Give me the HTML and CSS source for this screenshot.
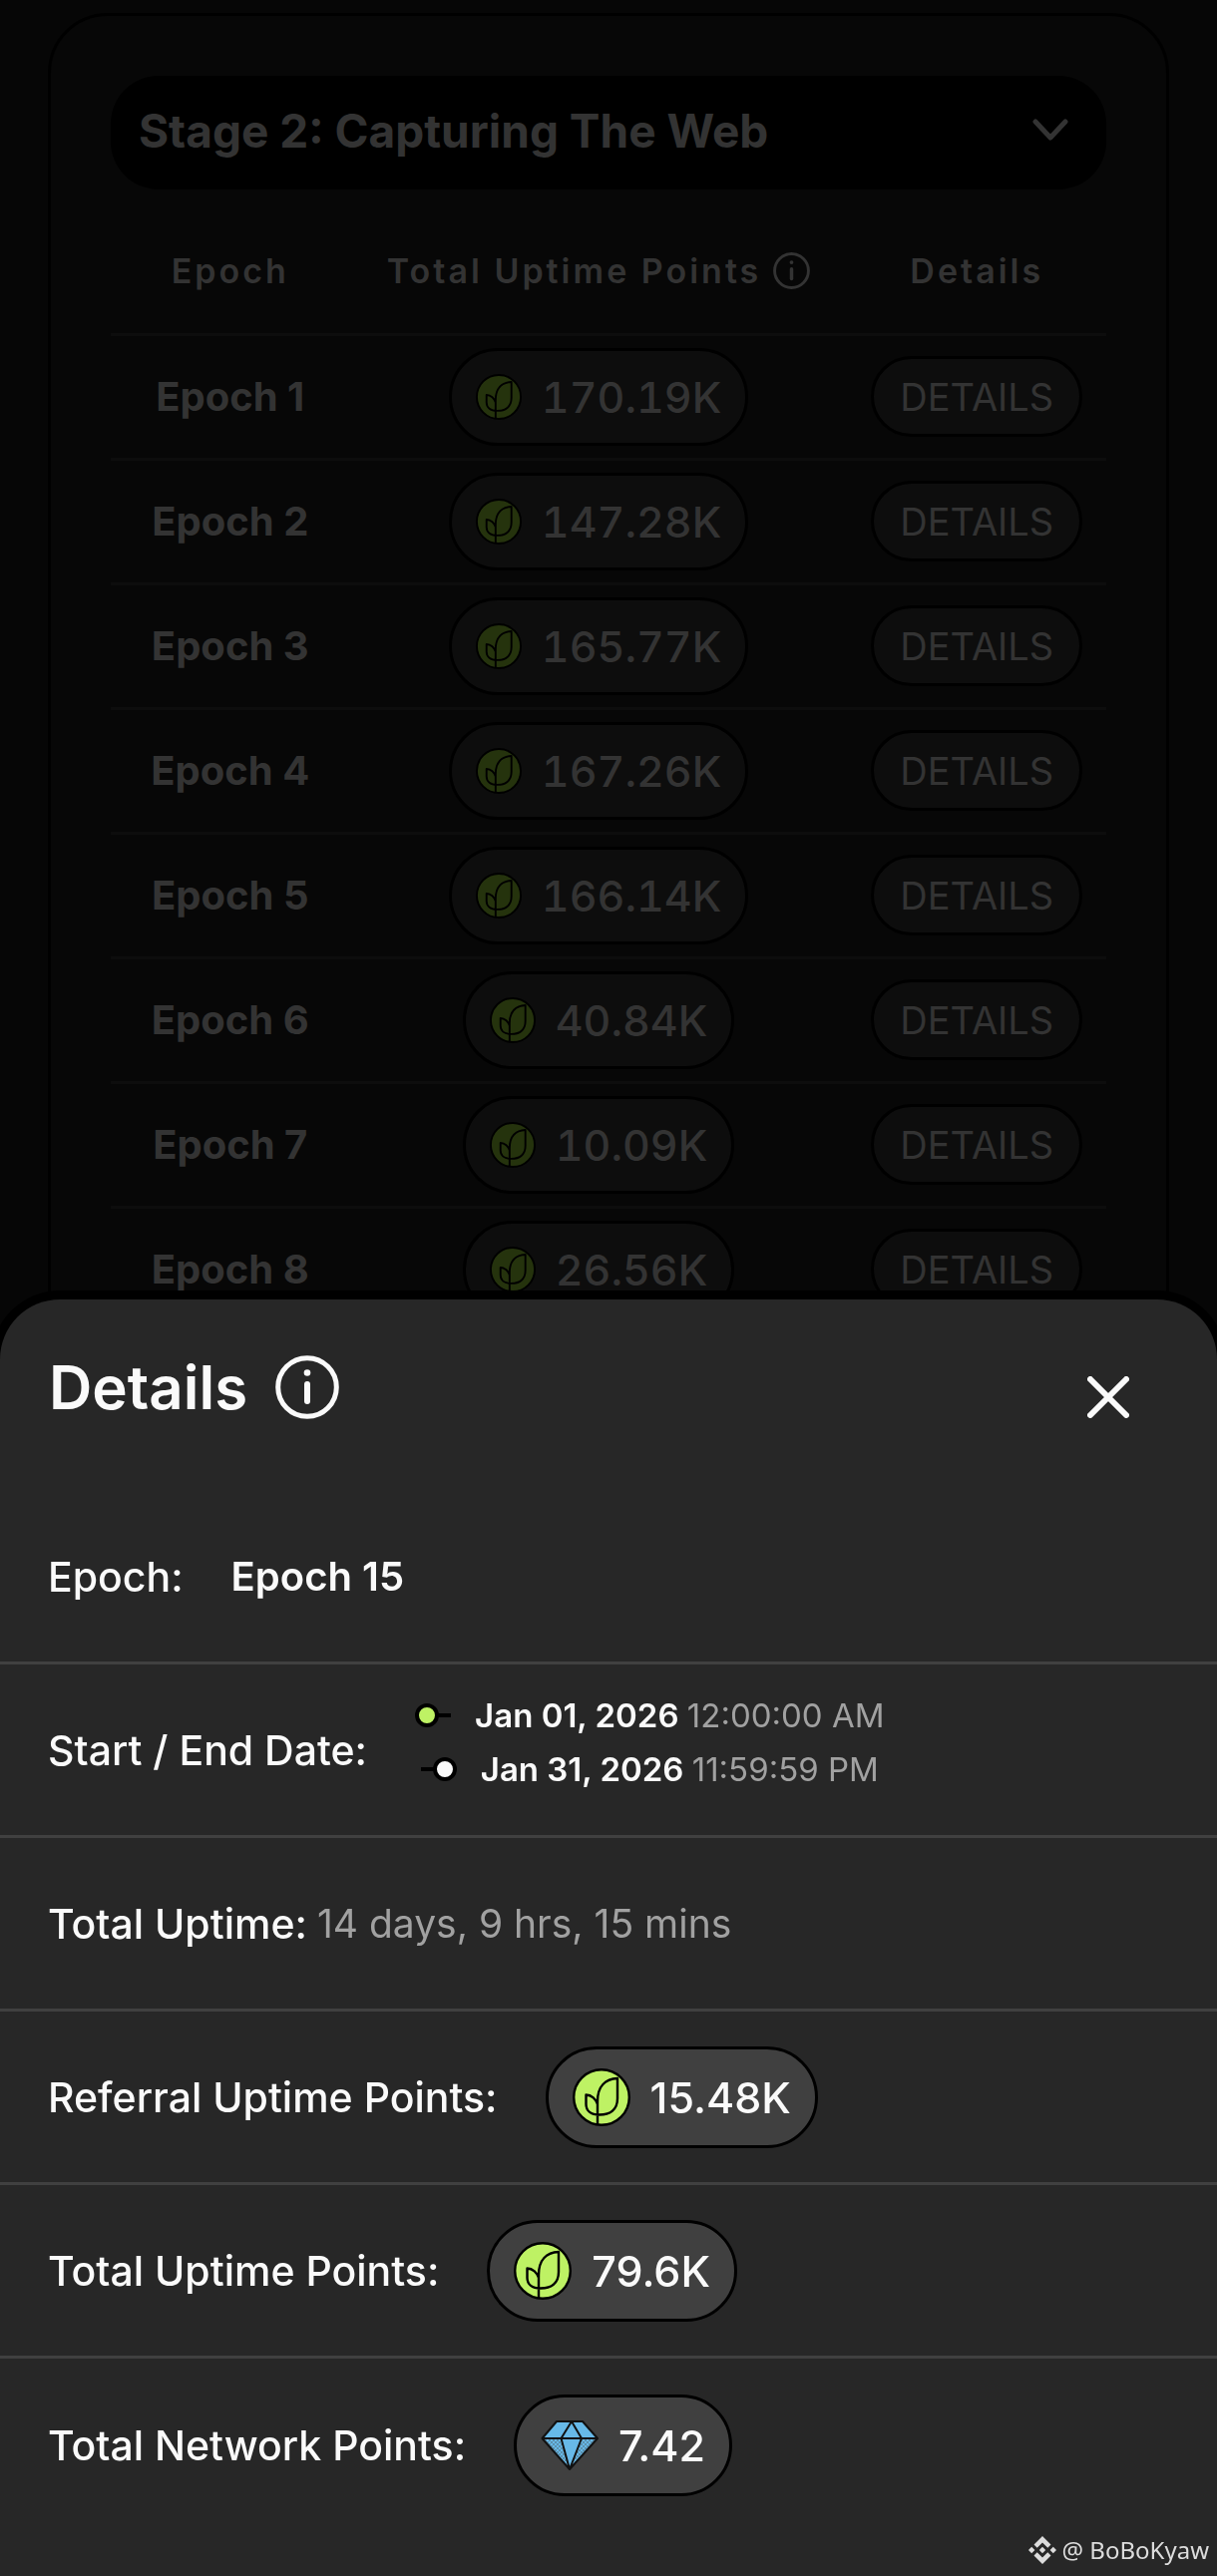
FILE: index.html
```html
<!DOCTYPE html>
<html lang="en">
<head>
<meta charset="utf-8">
<meta name="viewport" content="width=device-width, initial-scale=1">
<title>Epoch details</title>
<link rel="stylesheet" href="styles.css">
</head>
<body>
<svg class="sprite" aria-hidden="true">
  <symbol id="leaf" viewBox="0 0 58 58">
    <circle cx="29" cy="29" r="27.8" fill="var(--leaf-fill)" stroke="#000" stroke-width="2.4"/>
    <path d="M25 56V33C25 18 33 10.500 45 10V30C45 42 37 46.500 27 46.500C18 46.500 13.500 42 13.500 36V26.500C19 26.500 23.500 31 25 36" fill="none" stroke="#000" stroke-width="2.4" stroke-linejoin="round"/>
  </symbol>
  <symbol id="info" viewBox="0 0 64 64">
    <circle cx="32" cy="32" r="29.300" fill="none" stroke="currentColor" stroke-width="5"/>
    <circle cx="32" cy="17.500" r="3.300" fill="currentColor"/>
    <path d="M32 29V46" stroke="currentColor" stroke-width="6" stroke-linecap="round"/>
  </symbol>
  <symbol id="diamond" viewBox="0 0 58 52">
    <pattern id="dots" width="4" height="4" patternUnits="userSpaceOnUse">
      <circle cx="1" cy="1" r=".8" fill="#4b5a63"/>
      <circle cx="3" cy="3" r=".8" fill="#4b5a63"/>
    </pattern>
    <path d="M1.500 19L16 2H42L57 19L29 50Z" fill="#67b9e8"/>
    <path d="M1.500 19H20.500L29 50ZM57 19H41L29 50Z" fill="url(#dots)"/>
    <path d="M1.500 19L16 2H42L57 19L29 50ZM1.500 19H57M31 2L20.500 19L29 50L41 19L31 2" fill="none" stroke="#111" stroke-width="2" stroke-linejoin="round"/>
  </symbol>
</svg>

<main class="card">
  <button class="stage" type="button">
    <span>Stage 2: Capturing The Web</span>
    <svg class="chevron" viewBox="0 0 36 24" aria-hidden="true"><path d="M3 3L18 19L33 3"/></svg>
  </button>
  <table class="epochs">
    <thead>
      <tr>
        <th class="col-epoch">Epoch</th>
        <th class="col-points"><span class="th-info">Total Uptime Points <svg class="info-small" aria-hidden="true"><use href="#info"/></svg></span></th>
        <th class="col-details">Details</th>
      </tr>
    </thead>
    <tbody>
      <tr><td>Epoch 1</td><td><span class="pill"><svg class="leaf" aria-hidden="true"><use href="#leaf"/></svg>170.19K</span></td><td><button class="details" type="button">DETAILS</button></td></tr>
      <tr><td>Epoch 2</td><td><span class="pill"><svg class="leaf" aria-hidden="true"><use href="#leaf"/></svg>147.28K</span></td><td><button class="details" type="button">DETAILS</button></td></tr>
      <tr><td>Epoch 3</td><td><span class="pill"><svg class="leaf" aria-hidden="true"><use href="#leaf"/></svg>165.77K</span></td><td><button class="details" type="button">DETAILS</button></td></tr>
      <tr><td>Epoch 4</td><td><span class="pill"><svg class="leaf" aria-hidden="true"><use href="#leaf"/></svg>167.26K</span></td><td><button class="details" type="button">DETAILS</button></td></tr>
      <tr><td>Epoch 5</td><td><span class="pill"><svg class="leaf" aria-hidden="true"><use href="#leaf"/></svg>166.14K</span></td><td><button class="details" type="button">DETAILS</button></td></tr>
      <tr><td>Epoch 6</td><td><span class="pill"><svg class="leaf" aria-hidden="true"><use href="#leaf"/></svg>40.84K</span></td><td><button class="details" type="button">DETAILS</button></td></tr>
      <tr><td>Epoch 7</td><td><span class="pill"><svg class="leaf" aria-hidden="true"><use href="#leaf"/></svg>10.09K</span></td><td><button class="details" type="button">DETAILS</button></td></tr>
      <tr><td>Epoch 8</td><td><span class="pill"><svg class="leaf" aria-hidden="true"><use href="#leaf"/></svg>26.56K</span></td><td><button class="details" type="button">DETAILS</button></td></tr>
    </tbody>
  </table>
</main>

<section class="sheet" role="dialog" aria-labelledby="sheet-title">
  <header class="sheet-head">
    <h2 id="sheet-title">Details</h2>
    <svg class="info-large" aria-hidden="true"><use href="#info"/></svg>
    <button class="close" type="button" aria-label="Close">
      <svg viewBox="0 0 42 42" aria-hidden="true"><path d="M3 3L39 39M39 3L3 39"/></svg>
    </button>
  </header>
  <dl class="facts">
    <div class="fact"><dt>Epoch:</dt><dd class="strong">Epoch 15</dd></div>
    <div class="fact">
      <dt>Start / End Date:</dt>
      <dd class="dates">
        <span class="date"><svg class="marker" viewBox="0 0 36 24" aria-hidden="true"><path d="M20 12H36" stroke="#000" stroke-width="4"/><circle cx="12" cy="12" r="10" fill="#bef264" stroke="#000" stroke-width="4"/></svg><span>Jan 01, 2026 <span class="muted">12:00:00 AM</span></span></span>
        <span class="date"><svg class="marker" viewBox="0 0 36 24" aria-hidden="true"><path d="M0 12H16" stroke="#000" stroke-width="4"/><circle cx="24" cy="12" r="10" fill="#fafafa" stroke="#000" stroke-width="4"/></svg><span>Jan 31, 2026 <span class="muted">11:59:59 PM</span></span></span>
      </dd>
    </div>
    <div class="fact inline"><dt>Total Uptime:</dt><dd class="muted">14 days, 9 hrs, 15 mins</dd></div>
    <div class="fact"><dt>Referral Uptime Points:</dt><dd class="pill"><svg class="leaf" aria-hidden="true"><use href="#leaf"/></svg>15.48K</dd></div>
    <div class="fact"><dt>Total Uptime Points:</dt><dd class="pill"><svg class="leaf" aria-hidden="true"><use href="#leaf"/></svg>79.6K</dd></div>
    <div class="fact"><dt>Total Network Points:</dt><dd class="pill"><svg class="diamond" aria-hidden="true"><use href="#diamond"/></svg>7.42</dd></div>
  </dl>
  <p class="credit">
    <svg viewBox="0 0 28 28" aria-hidden="true"><path d="M14 0L22.500 8.500L19.300 11.700L14 6.400L8.700 11.700L5.500 8.500ZM14 28L5.500 19.500L8.700 16.300L14 21.600L19.300 16.300L22.500 19.500ZM14 10.800L17.200 14L14 17.200L10.800 14ZM3.200 10.800L6.400 14L3.200 17.200L0 14ZM24.800 10.800L28 14L24.800 17.200L21.600 14Z"/></svg>
    <span>@ BoBoKyaw</span>
  </p>
</section>
</body>
</html>
```
FILE: styles.css
```css
:root {
  --leaf-fill: #bef264;
}

* {
  box-sizing: border-box;
}

body {
  margin: 0;
  min-height: 100vh;
  display: flex;
  flex-direction: column;
  background: #060606;
  color: #333;
  font-family: Inter, "Liberation Sans", sans-serif;
  font-size: 40px;
}

button {
  font: inherit;
  color: inherit;
  cursor: pointer;
}

.sprite {
  position: absolute;
  width: 0;
  height: 0;
}

/* Dimmed page behind the sheet */
.card {
  --leaf-fill: #25330d;
  margin: 13px 48px 0;
  padding: 60px;
  border: 3px solid #000;
  border-radius: 60px;
  background: #070707;
}

.stage {
  display: flex;
  align-items: center;
  justify-content: space-between;
  width: 100%;
  height: 114px;
  padding: 0 38px 4px 28px;
  border: 0;
  border-radius: 48px;
  background: #000;
  font-size: 46px;
  font-weight: 700;
}

.chevron {
  width: 36px;
  height: 24px;
  fill: none;
  stroke: currentColor;
  stroke-width: 5;
  stroke-linecap: round;
  stroke-linejoin: round;
}

.epochs {
  width: 100%;
  margin-top: 20px;
  border-collapse: collapse;
  table-layout: fixed;
  text-align: center;
}

.epochs th,
.epochs td {
  height: 125px;
  padding: 0;
  border-bottom: 3px solid #0d0d0d;
  vertical-align: middle;
}

.epochs th {
  font-size: 34px;
  font-weight: 600;
  letter-spacing: 3px;
}

.epochs td:first-child {
  font-weight: 700;
}

.col-epoch {
  width: 24%;
}

.col-points {
  width: 50%;
}

.col-details {
  width: 26%;
}

.th-info {
  display: inline-flex;
  align-items: center;
  gap: 12px;
}

.info-small {
  width: 37px;
  height: 37px;
}

.pill {
  display: inline-flex;
  align-items: center;
  gap: 20px;
  height: 98px;
  padding: 0 24px;
  border: 3px solid #000;
  border-radius: 51px;
  background: #0d0d0d;
  font-size: 43px;
  font-weight: 500;
  vertical-align: middle;
}

.epochs .pill {
  font-variant-numeric: tabular-nums;
}

.leaf {
  width: 46px;
  height: 46px;
}

.details {
  height: 81px;
  padding: 0 26px;
  border: 3px solid #000;
  border-radius: 41px;
  background: #0d0d0d;
  font-size: 38px;
  vertical-align: middle;
}

/* Bottom sheet */
.sheet {
  position: fixed;
  right: 0;
  bottom: 0;
  left: 0;
  padding-bottom: 44px;
  border-radius: 60px 60px 0 0;
  background: #272727;
  box-shadow: 0 0 0 9px #000;
  color: #fafafa;
}

.sheet-head {
  display: flex;
  align-items: center;
  gap: 28px;
  height: 192px;
  padding: 0 84px 16px 49px;
}

.sheet-head h2 {
  margin: 0;
  font-size: 60px;
  font-weight: 600;
}

.info-large {
  width: 64px;
  height: 64px;
}

.close {
  display: flex;
  margin: 20px 0 0 auto;
  padding: 4px;
  border: 0;
  background: none;
}

.close svg {
  width: 42px;
  height: 42px;
  stroke: currentColor;
  stroke-width: 6;
  stroke-linecap: round;
}

.facts {
  margin: 0;
}

.fact {
  display: flex;
  align-items: center;
  gap: 48px;
  height: 174px;
  padding: 0 48px;
  border-bottom: 3px solid #404040;
}

.fact:last-child {
  border-bottom: 0;
}

.fact.inline {
  gap: 10px;
}

.fact dt {
  font-size: 41px;
  font-weight: 500;
}

.fact dd {
  margin: 0;
}

.fact .strong {
  font-weight: 600;
}

.muted {
  color: #a1a1a1;
  font-weight: 400;
}

.inline .muted {
  font-size: 39px;
}

.dates {
  display: flex;
  flex-direction: column;
  align-items: center;
  padding-bottom: 16px;
  font-size: 33px;
  font-weight: 600;
  line-height: 54px;
}

.date {
  display: flex;
  align-items: center;
  gap: 24px;
}

.marker {
  width: 36px;
  height: 24px;
}

.sheet .pill {
  height: 102px;
  background: #404040;
}

.sheet .leaf {
  width: 58px;
  height: 58px;
}

.diamond {
  width: 58px;
  height: 52px;
}

.credit {
  position: absolute;
  right: 8px;
  bottom: 9px;
  display: flex;
  align-items: center;
  gap: 6px;
  margin: 0;
  color: #dcdcdc;
  font: 24px/34px "Noto Sans", sans-serif;
}

.credit svg {
  width: 28px;
  height: 28px;
  fill: currentColor;
}
```
